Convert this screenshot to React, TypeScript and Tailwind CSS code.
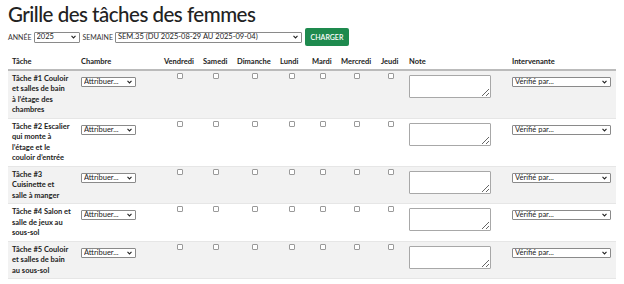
import React from 'react';

const DAYS = ['Vendredi', 'Samedi', 'Dimanche', 'Lundi', 'Mardi', 'Mercredi', 'Jeudi'];
const DAY_W = ['w-[39px]', 'w-[34px]', 'w-[43px]', 'w-[32px]', 'w-[29px]', 'w-[40px]', 'w-[28px]'];

// line breaks as they fall in the narrow task column
const TASKS = [
  ['Tâche #1 Couloir', 'et salles de bain', 'à l’étage des', 'chambres'],
  ['Tâche #2 Escalier', 'qui monte à', 'l’étage et le', 'couloir d’entrée'],
  ['Tâche #3', 'Cuisinette et', 'salle à manger'],
  ['Tâche #4 Salon et', 'salle de jeux au', 'sous-sol'],
  ['Tâche #5 Couloir', 'et salles de bain', 'au sous-sol'],
];

function Chevron() {
  return (
    <svg className="pointer-events-none absolute right-[4px] top-1/2 -translate-y-1/2" width="5" height="4" viewBox="0 0 10 7">
      <path d="M1 1.2 L5 5.2 L9 1.2" fill="none" stroke="#222" strokeWidth="2.2" />
    </svg>
  );
}

function Select({ value, className }: { value: string; className: string }) {
  return (
    <div className={`relative inline-block ${className}`}>
      <select className="block h-full w-full appearance-none rounded-[1px] border border-[#8a8a8a] bg-white pl-[2px] pr-[10px] text-[7.5px] leading-none text-[#222]">
        <option>{value}</option>
      </select>
      <Chevron />
    </div>
  );
}

export default function App() {
  return (
    <div className="min-h-screen bg-white px-[8px] pt-[1px] text-[#222]" style={{ fontFamily: 'Lato, "Noto Sans", sans-serif' }}>
      <h1 className="text-[20.5px] font-medium leading-[26px] tracking-[-0.5px] text-[#222]">Grille des tâches des femmes</h1>
      <div className="mt-[1px] flex items-center text-[7px] text-[#333]">
        <span className="mr-[2px]">ANNÉE</span>
        <Select value="2025" className="h-[11px] w-[46px]" />
        <span className="ml-[3px] mr-[2px]">SEMAINE</span>
        <Select value="SEM.35 (DU 2025-08-29 AU 2025-09-04)" className="h-[11px] w-[187px]" />
        <button className="ml-[3px] h-[18px] w-[44px] rounded-[2px] bg-[#1e8a4e] text-[7px] font-semibold text-white">CHARGER</button>
      </div>
      <table className="mt-[11px] w-[608px] table-fixed border-collapse text-[7.5px] leading-[10.5px]">
        <thead>
          <tr className="border-b-2 border-[#bbb] text-left font-bold">
            <th className="w-[69px] px-[4px] pb-[1px] pt-0">Tâche</th>
            <th className="w-[83px] px-[4px] pb-[1px]">Chambre</th>
            {DAYS.map((d, i) => (
              <th key={d} className={`${DAY_W[i]} px-[4px] pb-[1px]`}>{d}</th>
            ))}
            <th className="w-[103px] px-[4px] pb-[1px]">Note</th>
            <th className="w-[108px] px-[4px] pb-[1px]">Intervenante</th>
          </tr>
        </thead>
        <tbody>
          {TASKS.map((lines, r) => (
            <tr key={r} className={`${r % 2 === 0 ? 'bg-[#f2f2f2]' : 'bg-white'} border-b border-[#e6e6e6]`}>
              <td className="whitespace-nowrap px-[4px] pb-[2px] pt-[3px] align-top font-bold">
                {lines.map((l, i) => (
                  <div key={i}>{l}</div>
                ))}
              </td>
              <td className="px-[4px] pt-[6px] align-top">
                <Select value="Attribuer..." className="h-[10px] w-[55px]" />
              </td>
              {DAYS.map((d) => (
                <td key={d} className="pt-[2px] text-center align-top">
                  <input type="checkbox" className="inline-block h-[6px] w-[6px] appearance-none rounded-[1px] border border-[#9a9a9a] bg-white align-top" />
                </td>
              ))}
              <td className="px-[4px] pt-[4px] align-top">
                <textarea className="block h-[23px] w-[82px] resize rounded-[1px] border border-[#a8a8a8] bg-white" />
              </td>
              <td className="px-[4px] pt-[6px] align-top">
                <Select value="Vérifié par..." className="h-[10px] w-[99px]" />
              </td>
            </tr>
          ))}
        </tbody>
      </table>
    </div>
  );
}
